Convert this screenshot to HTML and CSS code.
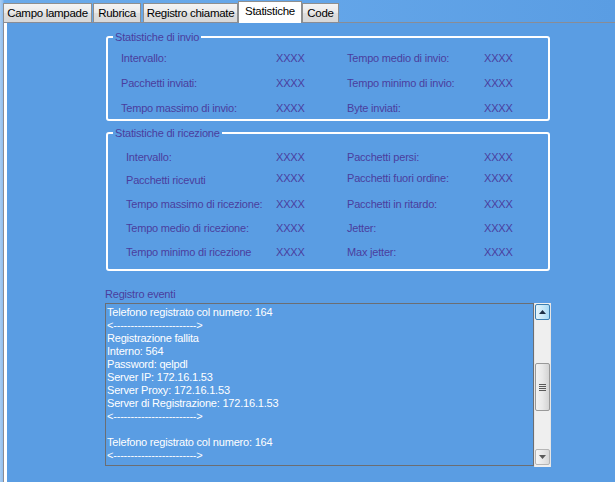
FILE: index.html
```html
<!DOCTYPE html>
<html>
<head>
<meta charset="utf-8">
<link rel="stylesheet" href="styles.css">
</head>
<body>
<div class="window">
  <div class="tabs">
    <div class="tab t1">Campo lampade</div>
    <div class="tab t2">Rubrica</div>
    <div class="tab t3">Registro chiamate</div>
    <div class="tab t4 selected">Statistiche</div>
    <div class="tab t5">Code</div>
  </div>
  <div class="panel">
    <div class="panel-inner">
      <div class="group g1">
        <div class="legend">Statistiche di invio</div>
        <div class="grid grid1">
          <span>Intervallo:</span><span>XXXX</span><span>Tempo medio di invio:</span><span>XXXX</span>
          <span>Pacchetti inviati:</span><span>XXXX</span><span>Tempo minimo di invio:</span><span>XXXX</span>
          <span>Tempo massimo di invio:</span><span>XXXX</span><span>Byte inviati:</span><span>XXXX</span>
        </div>
      </div>
      <div class="group g2">
        <div class="legend">Statistiche di ricezione</div>
        <div class="grid grid2">
          <span>Intervallo:</span><span>XXXX</span><span>Pacchetti persi:</span><span>XXXX</span>
          <span class="low">Pacchetti ricevuti</span><span>XXXX</span><span>Pacchetti fuori ordine:</span><span>XXXX</span>
          <span>Tempo massimo di ricezione:</span><span>XXXX</span><span>Pacchetti in ritardo:</span><span>XXXX</span>
          <span>Tempo medio di ricezione:</span><span>XXXX</span><span>Jetter:</span><span>XXXX</span>
          <span>Tempo minimo di ricezione</span><span>XXXX</span><span>Max jetter:</span><span>XXXX</span>
        </div>
      </div>
      <div class="log-label">Registro eventi</div>
      <div class="log">
        <div class="log-text">
          <div>Telefono registrato col numero: 164</div>
          <div>&lt;------------------------&gt;</div>
          <div>Registrazione fallita</div>
          <div>Interno: 564</div>
          <div>Password: qelpdl</div>
          <div>Server IP: 172.16.1.53</div>
          <div>Server Proxy: 172.16.1.53</div>
          <div>Server di Registrazione: 172.16.1.53</div>
          <div>&lt;------------------------&gt;</div>
          <div>&nbsp;</div>
          <div>Telefono registrato col numero: 164</div>
          <div>&lt;------------------------&gt;</div>
        </div>
        <div class="scrollbar">
          <div class="sb-btn sb-up"><svg width="7" height="4" viewBox="0 0 7 4"><path d="M0 4 L3.5 0 L7 4 Z" fill="#1d2f45"/></svg></div>
          <div class="sb-track1"></div>
          <div class="sb-thumb">
            <div class="grip"></div><div class="grip"></div><div class="grip"></div><div class="grip"></div>
          </div>
          <div class="sb-track2"></div>
          <div class="sb-btn sb-down"><svg width="7" height="4" viewBox="0 0 7 4"><path d="M0 0 L7 0 L3.5 4 Z" fill="#5a5a5a"/></svg></div>
        </div>
      </div>
    </div>
  </div>
</div>
</body>
</html>
```
FILE: styles.css
```css
html, body {
  margin: 0;
  padding: 0;
}
body {
  width: 615px;
  height: 482px;
  overflow: hidden;
  font-family: "Liberation Sans", Arial, sans-serif;
  font-size: 11px;
  letter-spacing: -0.2px;
  background: linear-gradient(90deg, #a9cdf1 0px, #8fbdee 3px, #6aaaea 4px, #64a6e9 300px, #5a9de3 615px);
}
.window {
  display: flex;
  flex-direction: column;
  height: 482px;
}
.tabs {
  display: flex;
  align-items: flex-end;
  height: 22px;
  padding-left: 3px;
  position: relative;
  z-index: 2;
}
.tab {
  box-sizing: border-box;
  height: 19px;
  border: 1px solid #8e8f8f;
  border-bottom: none;
  background: linear-gradient(#f4f4f4, #e9e9e9 50%, #dedede 51%, #d8d8d8);
  color: #000;
  font-size: 11.5px;
  letter-spacing: -0.3px;
  line-height: 18px;
  text-align: center;
  white-space: nowrap;
}
.t1 { width: 89px; margin-right: 1px; }
.t2 { width: 48px; margin-right: 2px; }
.t3 { width: 95px; }
.t4 { width: 64px; }
.t5 { width: 37px; }
.tab.selected {
  height: 22px;
  margin-bottom: -1px;
  background: #ffffff;
  line-height: 19px;
}
.panel {
  flex: 1;
  margin-left: 3px;
  border-top: 1px solid #898c95;
  border-left: 1px solid #898c95;
  background: #5a9de3;
}
.panel-inner {
  box-sizing: border-box;
  height: 100%;
  border-left: 3px solid #ffffff;
  padding-top: 13px;
}
.group {
  box-sizing: border-box;
  margin-left: 99px;
  width: 444px;
  border: 2px solid #ffffff;
  border-radius: 3px;
  color: #4a3d9e;
}
.g1 { height: 85px; }
.g2 { height: 139px; margin-top: 11px; }
.legend {
  width: max-content;
  margin: -8px 0 0 5px;
  padding: 0 2px;
  line-height: 14px;
  background: #5a9de3;
}
.grid {
  display: grid;
  white-space: nowrap;
}
.grid span {
  display: flex;
  align-items: center;
}
.grid1 {
  padding: 1px 0 0 13px;
  grid-template-columns: 155px 71px 137px 1fr;
  grid-auto-rows: 25px;
}
.grid2 {
  padding: 6px 0 0 18px;
  grid-template-columns: 150px 71px 137px 1fr;
  grid-template-rows: 22px 20px 32px 16px 32px;
}
.grid2 .low {
  padding-top: 3px;
}
.log-label {
  margin: 16px 0 2px 98px;
  line-height: 14px;
  color: #4a3d9e;
}
.log {
  display: flex;
  margin-left: 98px;
  height: 163px;
}
.log-text {
  box-sizing: border-box;
  width: 429px;
  height: 163px;
  border: 1px solid #6b6e73;
  padding: 2px 0 0 1px;
  color: #ffffff;
  line-height: 13px;
  overflow: hidden;
  white-space: nowrap;
}
.scrollbar {
  box-sizing: border-box;
  width: 17px;
  height: 164px;
  background: #efefef;
  border-left: 1px solid #e6e6e6;
  border-right: 1px solid #e6e6e6;
  display: flex;
  flex-direction: column;
  align-items: center;
  padding-top: 1px;
}
.sb-btn {
  box-sizing: border-box;
  width: 15px;
  height: 16px;
  border-radius: 2px;
  display: flex;
  align-items: center;
  justify-content: center;
}
.sb-up {
  border: 1px solid #3c7fb1;
  background: linear-gradient(90deg, #e3f4fc, #c4e7f8 60%, #a9dbf6);
}
.sb-down {
  border: 1px solid #b5b5b5;
  background: linear-gradient(90deg, #f7f7f7, #e6e6e6 60%, #d9d9d9);
}
.sb-track1 { height: 43px; }
.sb-track2 { height: 38px; }
.sb-thumb {
  box-sizing: border-box;
  width: 15px;
  height: 48px;
  border: 1px solid #999999;
  border-radius: 2px;
  background: linear-gradient(90deg, #f3f3f3, #e8e8e8 50%, #d4d4d4);
  display: flex;
  flex-direction: column;
  align-items: center;
  justify-content: center;
  gap: 1px;
}
.grip {
  width: 7px;
  height: 1px;
  background: #5a5a5a;
}
```
